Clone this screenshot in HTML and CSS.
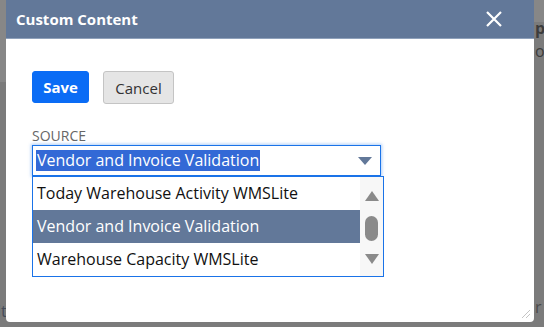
FILE: index.html
```html
<!DOCTYPE html>
<html lang="en">

<head>
    <meta charset="UTF-8">
    <meta name="viewport" content="width=device-width, initial-scale=1.0">
    <title>Custom Content</title>
    <link rel="stylesheet" href="styles.css">
</head>

<body>
    <!-- Page behind the modal -->
    <div class="page">
        <div class="page-top"></div>
        <div class="page-side"></div>
        <span class="page-text page-text-p">p</span>
        <span class="page-text page-text-or">or</span>
        <span class="page-text page-text-it">it</span>
        <span class="page-text page-text-r">r</span>
    </div>

    <!-- Modal -->
    <div class="dialog">
        <div class="dialog-header">
            <span class="dialog-title">Custom Content</span>
            <svg class="close-icon" width="16" height="16" viewBox="0 0 16 16">
                <path d="M1 1 L15 15 M15 1 L1 15" stroke="#fff" stroke-width="2.2" fill="none" />
            </svg>
        </div>
        <div class="dialog-body">
            <div class="buttons">
                <button class="btn btn-save">Save</button>
                <button class="btn btn-cancel">Cancel</button>
            </div>
            <label class="field-label">SOURCE</label>
            <div class="select">
                <div class="select-box">
                    <span class="select-value">Vendor and Invoice Validation</span>
                    <svg class="select-arrow" width="14" height="8" viewBox="0 0 14 8">
                        <path d="M0 0 H14 L7 8 Z" fill="#627899" />
                    </svg>
                </div>
                <div class="select-list">
                    <ul class="options">
                        <li>Today Warehouse Activity WMSLite</li>
                        <li class="active">Vendor and Invoice Validation</li>
                        <li>Warehouse Capacity WMSLite</li>
                    </ul>
                    <div class="scrollbar">
                        <svg width="14" height="10" viewBox="0 0 14 10">
                            <path d="M7 0 L14 10 H0 Z" fill="#8a8a8a" />
                        </svg>
                        <div class="thumb"></div>
                        <svg width="14" height="10" viewBox="0 0 14 10">
                            <path d="M0 0 H14 L7 10 Z" fill="#8a8a8a" />
                        </svg>
                    </div>
                </div>
            </div>
        </div>
        <svg class="grip" width="12" height="12" viewBox="0 0 12 12">
            <path d="M11 3 L3 11 M11 7 L7 11" stroke="#c4c4c4" stroke-width="1" fill="none" />
        </svg>
    </div>
</body>

</html>
```

FILE: styles.css
```css
body {
    margin: 0;
    width: 544px;
    height: 327px;
    overflow: hidden;
    background-color: #7b7b7b;
    font-family: 'Open Sans', 'Liberation Sans', sans-serif;
    position: relative;
}

.page-top {
    height: 22px;
    background-color: #878787;
}

.page-side {
    width: 6px;
    height: 60px;
    background-color: #878787;
}

.page-text {
    position: absolute;
    color: #3c3c3c;
    font-size: 16px;
}

.page-text-p {
    left: 535px;
    top: 17px;
    font-weight: 700;
}

.page-text-or {
    left: 535px;
    top: 40px;
    font-weight: 400;
}

.page-text-it {
    left: -3px;
    top: 300px;
    color: #444c5a;
}

.page-text-r {
    left: 535px;
    top: 296px;
    color: #4a4a4a;
}

.dialog {
    position: absolute;
    left: 6px;
    top: 0;
    width: 528px;
    height: 322px;
    background-color: #fff;
    border-radius: 0 0 4px 4px;
}

.dialog-header {
    height: 39px;
    background-color: #627899;
    border-bottom: 1px solid #8fa1bb;
    box-sizing: border-box;
    display: flex;
    align-items: center;
    justify-content: space-between;
    padding: 0 32px 0 10px;
}

.dialog-title {
    color: #fff;
    font-size: 15px;
    font-weight: 700;
    margin-top: -1px;
}

.close-icon {
    margin-top: -1px;
}

.dialog-body {
    padding: 32px 0 0 26px;
}

.buttons {
    display: flex;
    gap: 14px;
}

.btn {
    height: 32px;
    font-family: 'Open Sans', 'Liberation Sans', sans-serif;
    font-size: 15px;
    border-radius: 3px;
    padding: 0;
}

.btn-save {
    width: 57px;
    background-color: #0a6cf5;
    border: 1px solid #0a6cf5;
    color: #fff;
    font-weight: 700;
}

.btn-cancel {
    width: 71px;
    height: 33px;
    background-color: #e5e5e5;
    border: 1px solid #c4c4c4;
    color: #333;
    font-weight: 500;
}

.field-label {
    display: block;
    margin-top: 23px;
    font-size: 14px;
    line-height: 17px;
    color: #666;
}

.select {
    width: 352px;
    margin-top: 1px;
}

.select-box {
    width: 349px;
    height: 31px;
    box-sizing: border-box;
    border: 1px solid #1a73e8;
    box-shadow: 0 0 3px 1px rgba(26, 115, 232, 0.35);
    display: flex;
    align-items: center;
    justify-content: space-between;
    padding: 0 8px 0 3px;
}

.select-value {
    background-color: #3369d6;
    color: #fff;
    font-size: 16px;
    line-height: 21px;
    padding: 0 1px;
}

.select-list {
    width: 352px;
    height: 101px;
    box-sizing: border-box;
    border: 1px solid #1a73e8;
    background-color: #fff;
    display: flex;
}

.options {
    list-style: none;
    margin: 0;
    padding: 0;
    flex: 1;
}

.options li {
    height: 33px;
    line-height: 33px;
    padding-left: 4px;
    font-size: 16px;
    color: #111;
    white-space: nowrap;
}

.options li.active {
    background-color: #627899;
    color: #fff;
}

.scrollbar {
    width: 23px;
    background-color: #f7f7f7;
    display: flex;
    flex-direction: column;
    align-items: center;
    padding-top: 14px;
    box-sizing: border-box;
}

.thumb {
    width: 13px;
    height: 25px;
    border-radius: 7px;
    background-color: #8a8a8a;
    margin: 15px 0 13px;
}

.grip {
    position: absolute;
    right: 3px;
    bottom: 3px;
}
```
